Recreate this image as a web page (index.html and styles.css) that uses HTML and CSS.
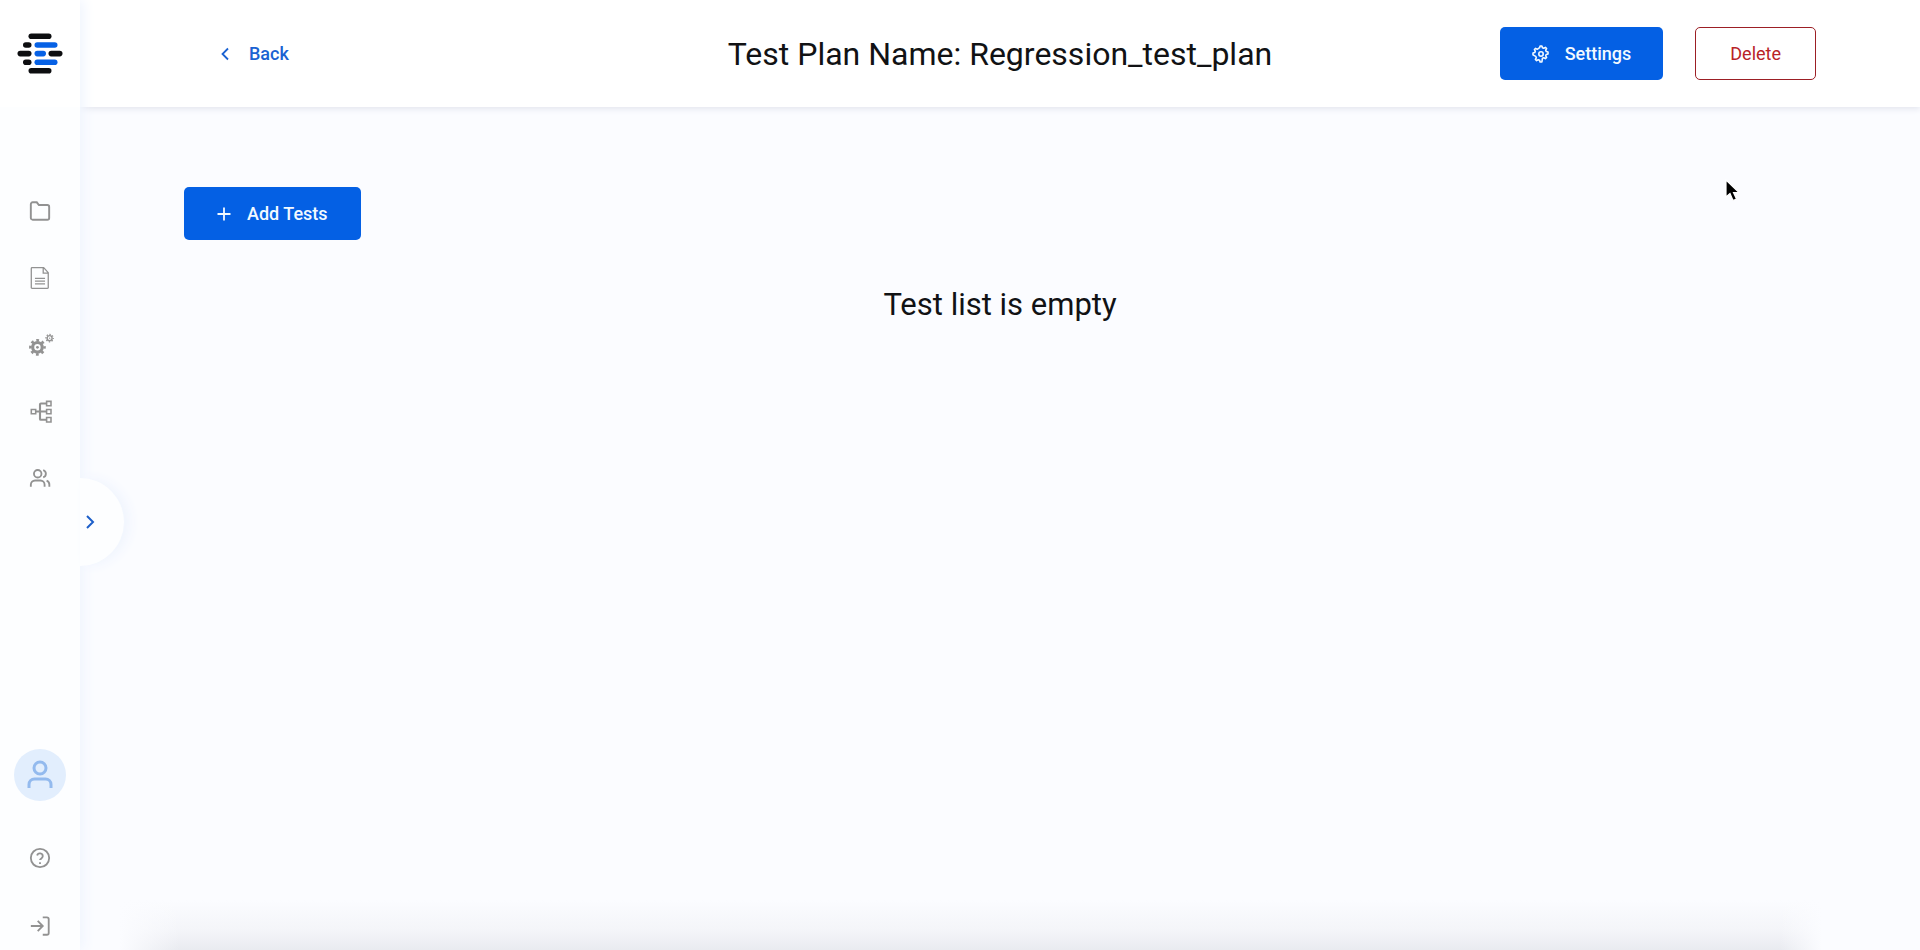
FILE: index.html
```html
<!DOCTYPE html>
<html lang="en">
<head>
<meta charset="utf-8">
<meta name="viewport" content="width=device-width, initial-scale=1">
<title>Test Plan</title>
<link rel="stylesheet" href="styles.css">
</head>
<body class="app">
<aside class="sidebar">
  <a class="logo" href="#" aria-label="Home">
    <svg width="46" height="42" viewBox="0 0 46 42" fill="#0d0e10">
      <rect x="11.500" y="0.500" width="23" height="5.600" rx="2.800"/>
      <rect x="6" y="9.200" width="8.500" height="5.600" rx="2.800"/>
      <rect x="17.500" y="9.200" width="23" height="5.600" rx="2.800" fill="#0661e5"/>
      <rect x="0.500" y="17.800" width="14" height="5.600" rx="2.800"/>
      <rect x="17.500" y="17.800" width="11.500" height="5.600" rx="2.800" fill="#0661e5"/>
      <rect x="31.500" y="17.800" width="14" height="5.600" rx="2.800"/>
      <rect x="6" y="26.400" width="8.500" height="5.600" rx="2.800"/>
      <rect x="17.500" y="26.400" width="23" height="5.600" rx="2.800" fill="#0661e5"/>
      <rect x="11.500" y="35" width="23" height="5.600" rx="2.800"/>
    </svg>
  </a>
  <nav class="nav" aria-label="Main">
    <a class="nav-link" href="#" aria-label="Projects">
      <svg class="icon" viewBox="0 0 24 24" stroke-width="2.100"><path d="M22 19.500a2 2 0 0 1-2 2H4a2 2 0 0 1-2-2v-15a2 2 0 0 1 2-2h4.500l2.300 3H20a2 2 0 0 1 2 2z"/></svg>
    </a>
    <a class="nav-link" href="#" aria-label="Documents">
      <svg class="icon" viewBox="0 0 24 24" stroke-width="1.400"><path d="M3.500.7H16l5 5.500v16.300a.8.8 0 0 1-.8.8H3.300a.8.800 0 0 1-.8-.8V1.500a.8.800 0 0 1 .8-.8zM15.500.8v5.900H21M6.500 12.500h11M6.500 15.500h11M6.500 18.500h11"/></svg>
    </a>
    <a class="nav-link" href="#" aria-label="Configuration">
      <svg class="icon" viewBox="0 0 24 24">
        <circle cx="9.200" cy="14.500" r="5.200" stroke-width="3.400"/>
        <circle cx="9.200" cy="14.500" r="7.700" stroke-width="2.800" stroke-dasharray="3 3.048" stroke-dashoffset="1.500"/>
        <circle cx="9.200" cy="14.500" r="1.500" fill="currentColor" stroke="none"/>
        <circle cx="22.500" cy="4.500" r="2.700" stroke-width="1.500"/>
        <circle cx="22.500" cy="4.500" r="4" stroke-width="1.400" stroke-dasharray="1.500 1.642" stroke-dashoffset=".75"/>
        <circle cx="22.500" cy="4.500" r=".8" fill="currentColor" stroke="none"/>
      </svg>
    </a>
    <a class="nav-link" href="#" aria-label="Environments">
      <svg class="icon" viewBox="0 0 24 24" stroke-width="1.700"><path stroke-width="2.300" d="M7.500 11.500h11.500M19 2.700h-6a1 1 0 0 0-1 1v15.800a1 1 0 0 0 1 1h6"/><path d="M2.500 9.200h4.800v4.800H2.500zM19.200.4H24v4.800h-4.800zM19.200 9.200H24v4.800h-4.800zM19.200 18.100H24v4.800h-4.800z"/></svg>
    </a>
    <a class="nav-link" href="#" aria-label="Team">
      <svg class="icon" viewBox="0 0 24 24" stroke-width="2"><path d="M2 20.500v-2.300a4.600 4.600 0 0 1 4.600-4.600h5.800a4.600 4.600 0 0 1 4.600 4.600v2.300M22.200 20.500v-2.300a4.600 4.600 0 0 0-3-4.500M15.500 2.300a4.200 4.200 0 0 1 0 8"/><circle cx="9.500" cy="6.300" r="4.100"/></svg>
    </a>
  </nav>
  <button class="expand" type="button" aria-label="Expand menu">
    <svg width="10" height="14" viewBox="0 0 10 14" fill="none" stroke="#1d5fc9" stroke-width="2"><path d="M2 1l6 6-6 6"/></svg>
  </button>
  <div class="account">
    <a class="avatar" href="#" aria-label="Profile">
      <svg width="28" height="30" viewBox="0 0 28 30" fill="none" stroke="#93baee" stroke-width="3"><circle cx="14" cy="8" r="6"/><path d="M3 28v-3.500a5.500 5.500 0 0 1 5.500-5.500h11a5.500 5.500 0 0 1 5.500 5.500V28"/></svg>
    </a>
    <a class="account-link" href="#" aria-label="Help">
      <svg class="icon" viewBox="0 0 24 24" stroke-width="2"><circle cx="12" cy="12" r="10"/><path d="M8.900 9.300a3.100 3.100 0 0 1 6.100.900c0 2.100-3 2.800-3 4M12 16.500v2"/></svg>
    </a>
    <a class="account-link" href="#" aria-label="Log out">
      <svg class="icon" viewBox="0 0 24 24" stroke-width="2"><path d="M2 12h13M9.500 6.500L15 12l-5.500 5.500M15 2.500h4.500a2 2 0 0 1 2 2v15a2 2 0 0 1-2 2H15"/></svg>
    </a>
  </div>
</aside>
<div class="page">
  <header class="header">
    <a class="back" href="#">
      <svg width="8" height="14" viewBox="0 0 8 14" fill="none" stroke="currentColor" stroke-width="1.800"><path d="M7 1.500L1.500 7 7 12.500"/></svg>
      Back
    </a>
    <h1 class="title">Test Plan Name: Regression_test_plan</h1>
    <div class="actions">
      <button class="button button-primary button-settings" type="button">
        <svg width="18" height="18" viewBox="0 0 18 18" fill="none" stroke="currentColor" stroke-width="1.600" stroke-linejoin="round"><path d="M7.600 2.700L8.100 1h1.800l.5 1.700 1.400.600 1.600-.9 1.200 1.200-.9 1.600.6 1.400 1.700.5v1.800l-1.700.5-.6 1.400.9 1.600-1.200 1.200-1.600-.9-1.400.6L9.900 17H8.100l-.5-1.700-1.400-.6-1.600.9-1.200-1.200.9-1.600-.6-1.400L1 9.900V8.100l1.700-.5.600-1.400-.9-1.600 1.200-1.200 1.600.9z"/><circle cx="9" cy="9" r="2.200"/></svg>
        Settings
      </button>
      <button class="button button-danger" type="button">Delete</button>
    </div>
  </header>
  <main class="content">
    <button class="button button-primary" type="button">
      <svg width="14" height="14" viewBox="0 0 14 14" fill="none" stroke="currentColor" stroke-width="1.800"><path d="M7 .5v13M.5 7h13"/></svg>
      Add Tests
    </button>
    <h2 class="empty">Test list is empty</h2>
  </main>
</div>
<svg class="pointer" width="16" height="24" viewBox="0 0 16 24"><path d="M1 1v17l4-3.500 3 7 3.500-1.500-3-6.500H14z" fill="#000" stroke="#fff" stroke-width="1.200"/></svg>
</body>
</html>
```
FILE: styles.css
```css
* {
  box-sizing: border-box;
}

.app {
  position: relative;
  display: flex;
  min-height: 100vh;
  margin: 0;
  background: #fbfcff;
  color: #111214;
  font-family: Roboto, "Liberation Sans", sans-serif;
  font-size: 18px;
}

.sidebar {
  position: relative;
  z-index: 2;
  display: flex;
  flex: none;
  flex-direction: column;
  align-items: center;
  width: 80px;
  padding-bottom: 13px;
  background: #fdfeff;
  box-shadow: 4px 0 12px #f0f5fe;
}

.logo {
  display: flex;
  align-items: center;
  justify-content: center;
  width: 80px;
  height: 107px;
  background: #fff;
}

.nav {
  display: flex;
  flex-direction: column;
  gap: 45px;
  margin-top: 93px;
}

.nav-link,
.account-link {
  display: flex;
  color: #929292;
}

.icon {
  width: 22px;
  height: 22px;
  overflow: visible;
  fill: none;
  stroke: currentColor;
}

.expand {
  position: absolute;
  top: 478px;
  left: 80px;
  display: flex;
  align-items: center;
  width: 44px;
  height: 88px;
  padding: 0 0 0 5px;
  border: 0;
  border-radius: 0 44px 44px 0;
  background: #fdfeff;
  box-shadow: 6px 0 12px #f0f5fe;
}

.account {
  display: flex;
  flex-direction: column;
  align-items: center;
  gap: 46px;
  margin-top: auto;
}

.avatar {
  display: flex;
  align-items: center;
  justify-content: center;
  width: 52px;
  height: 52px;
  border-radius: 50%;
  background: #e2eefd;
}

.page {
  flex: 1;
  min-width: 0;
  background:
    linear-gradient(to right, #fbfcff 40px, transparent 100px) bottom / 100% 50px no-repeat,
    linear-gradient(to left, #fbfcff 98px, transparent 140px) bottom / 100% 50px no-repeat,
    linear-gradient(to top, #e9ebf0, #f4f5f9 20px, #fbfcff 50px);
}

.header {
  display: grid;
  grid-template-columns: 1fr auto 1fr;
  align-items: center;
  height: 107px;
  padding: 0 104px;
  background: #fff;
  box-shadow: 0 2px 6px #e3e5ee;
}

.back {
  display: flex;
  align-items: center;
  justify-self: start;
  gap: 20px;
  padding-left: 37px;
  color: #1a62d2;
  font-weight: 500;
  text-decoration: none;
}

.title,
.empty {
  margin: 0;
  font-weight: 400;
  line-height: 40px;
}

.title {
  font-size: 32px;
}

.empty {
  margin-top: 45px;
  font-size: 31px;
  text-align: center;
}

.actions {
  display: flex;
  justify-content: flex-end;
  gap: 32px;
}

.button {
  display: flex;
  align-items: center;
  gap: 16px;
  height: 53px;
  padding: 0 32px;
  border: 1px solid transparent;
  border-radius: 5px;
  font: inherit;
  font-weight: 500;
}

.button-primary {
  background: #0460e4;
  color: #f2f9ff;
}

.button-settings {
  gap: 15px;
  padding: 0 31px;
}

.button-danger {
  padding: 0 34px;
  border-color: #9c1f25;
  background: #fff;
  color: #b92327;
  font-weight: 400;
}

.content {
  padding: 80px 104px;
}

.pointer {
  position: absolute;
  z-index: 3;
  top: 179px;
  left: 1725px;
}
```
